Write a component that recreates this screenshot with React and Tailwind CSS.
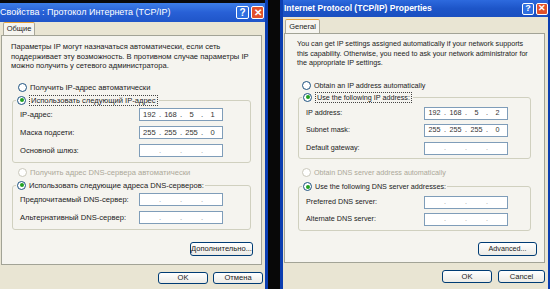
import React from 'react';

const Radio = ({ checked, disabled, label, focus }) => (
  <div className={`flex items-center gap-[3px] whitespace-nowrap ${disabled ? 'text-[#aca899]' : 'text-[#222]'}`}>
    <span
      className={`flex h-[9px] w-[9px] items-center justify-center rounded-full border bg-white ${
        disabled ? 'border-[#cac8bb]' : 'border-[#1c5180]'
      }`}
    >
      {checked && <span className="h-[4px] w-[4px] rounded-full bg-[#21a121]" />}
    </span>
    <span className={focus ? 'border border-dotted border-[#444] px-[1px] leading-[9px]' : 'leading-[9px]'}>{label}</span>
  </div>
);

const IpBox = ({ parts }) => (
  <div className="flex h-[13px] w-[84px] items-center border border-[#7f9db9] bg-white text-[#333]">
    {[0, 1, 2, 3].map((i) => (
      <React.Fragment key={i}>
        <span className="flex-1 text-center">{parts ? parts[i] : ''}</span>
        {i < 3 && <span className={parts ? '' : 'text-[#999]'}>.</span>}
      </React.Fragment>
    ))}
  </div>
);

const Btn = ({ children, w }) => (
  <div
    className={`flex items-center justify-center rounded-[3px] border border-[#003c74] bg-gradient-to-b from-white to-[#ecebe6] text-[#222] ${w}`}
  >
    {children}
  </div>
);

const TitleButtons = ({ size }) => (
  <div className="flex gap-[2px]">
    <div className={`flex items-center justify-center rounded-[2px] border border-white bg-[#2f6fe0] font-bold text-white ${size}`}>?</div>
    <div className={`flex items-center justify-center rounded-[2px] border border-white bg-[#e2512a] font-bold text-white ${size}`}>✕</div>
  </div>
);

const Row = ({ label, parts, h, labelW }) => (
  <div className={`flex items-center whitespace-nowrap ${h}`}>
    <span className={labelW}>{label}</span>
    <IpBox parts={parts} />
  </div>
);

const LeftDialog = () => (
  <div className="flex w-[268px] flex-col border-r-[3px] border-[#0b3db0]">
    <div className="h-[3px] bg-[#0a0a0a]" />
    <div className="flex h-[19px] items-center justify-between bg-gradient-to-b from-[#3d7ee8] via-[#2860d6] to-[#1f55c8] pr-[1px]">
      <span className="text-[9px] text-white">Свойства : Протокол Интернета (TCP/IP)</span>
      <TitleButtons size="h-[13px] w-[13px] text-[10px] leading-none" />
    </div>
    <div className="flex flex-1 flex-col bg-[#e9e5d3] text-[#222]">
      <div className="flex h-[13px] items-end pl-[3px]">
        <div className="flex h-[13px] w-[32px] items-center justify-center rounded-t-[2px] border border-b-0 border-[#a9a89a] border-t-[#e8a33a] bg-[#f6f5f0] text-[7.5px]">
          Общие
        </div>
      </div>
      <div className="ml-[1px] flex h-[230px] w-[261px] flex-col border border-[#a2a396] bg-[#f5f4ef] text-[7.6px]">
        <p className="px-[9px] pt-[6px] leading-[9.5px]">
          Параметры IP могут назначаться автоматически, если сеть поддерживает эту возможность. В противном случае параметры IP можно получить у сетевого администратора.
        </p>
        <div className="mt-[12px] pl-[16px]">
          <Radio label="Получить IP-адрес автоматически" />
        </div>
        <fieldset className="mx-[10px] mt-[3px] rounded-[3px] border border-[#d0d0bf] px-[7px] pb-[2px]">
          <legend className="-ml-[4px] px-[1px]">
            <Radio checked focus label="Использовать следующий IP-адрес" />
          </legend>
          <Row label="IP-адрес:" parts={['192', '168', '5', '1']} h="h-[18px]" labelW="w-[119px]" />
          <Row label="Маска подсети:" parts={['255', '255', '255', '0']} h="h-[18px]" labelW="w-[119px]" />
          <Row label="Основной шлюз:" h="h-[18px]" labelW="w-[119px]" />
        </fieldset>
        <div className="mt-[5px] pl-[16px]">
          <Radio disabled label="Получить адрес DNS-сервера автоматически" />
        </div>
        <fieldset className="mx-[10px] mt-[4px] rounded-[3px] border border-[#d0d0bf] px-[7px] pb-[2px] pt-[1px]">
          <legend className="-ml-[4px] px-[1px]">
            <Radio checked label="Использовать следующие адреса DNS-серверов:" />
          </legend>
          <Row label="Предпочитаемый DNS-сервер:" h="h-[18px]" labelW="w-[119px]" />
          <Row label="Альтернативный DNS-сервер:" h="h-[18px]" labelW="w-[119px]" />
        </fieldset>
        <div className="mt-[12px] flex justify-end pr-[8px]">
          <Btn w="w-[63px] h-[14px]">Дополнительно...</Btn>
        </div>
      </div>
      <div className="mt-[7px] flex justify-end gap-[5px] pr-[2px] text-[7.6px]">
        <Btn w="w-[50px] h-[12px]">OK</Btn>
        <Btn w="w-[50px] h-[12px]">Отмена</Btn>
      </div>
    </div>
  </div>
);

const RightDialog = () => (
  <div className="flex w-[270px] flex-col border-l-[3px] border-r-[2px] border-[#0b3db0]">
    <div className="flex h-[17px] items-center justify-between bg-gradient-to-b from-[#2d6ade] via-[#1d55c8] to-[#1a4fc0] pl-[1px]">
      <span className="text-[8.5px] font-bold text-white">Internet Protocol (TCP/IP) Properties</span>
      <TitleButtons size="h-[12px] w-[12px] text-[9px] leading-none" />
    </div>
    <div className="flex flex-1 flex-col bg-[#e9e5d3] text-[#222]">
      <div className="flex h-[16px] items-end pl-[2px]">
        <div className="flex h-[14px] w-[35px] items-center justify-center rounded-t-[2px] border border-b-0 border-[#a9a89a] border-t-[#e8a33a] bg-[#f6f5f0] text-[7.5px]">
          General
        </div>
      </div>
      <div className="ml-[1px] flex h-[230px] w-[261px] flex-col border border-[#a2a396] bg-[#f5f4ef] text-[7.2px]">
        <p className="px-[12px] pt-[5px] leading-[9.5px]">
          You can get IP settings assigned automatically if your network supports this capability. Otherwise, you need to ask your network administrator for the appropriate IP settings.
        </p>
        <div className="mt-[13px] pl-[17px]">
          <Radio label="Obtain an IP address automatically" />
        </div>
        <fieldset className="mx-[13px] mt-[2px] rounded-[3px] border border-[#d0d0bf] px-[7px] pb-[1px] pt-[2px]">
          <legend className="-ml-[4px] px-[1px]">
            <Radio checked focus label="Use the following IP address:" />
          </legend>
          <Row label="IP address:" parts={['192', '168', '5', '2']} h="h-[17.5px]" labelW="w-[118px]" />
          <Row label="Subnet mask:" parts={['255', '255', '255', '0']} h="h-[17.5px]" labelW="w-[118px]" />
          <Row label="Default gateway:" h="h-[17.5px]" labelW="w-[118px]" />
        </fieldset>
        <div className="mt-[9px] pl-[17px]">
          <Radio disabled label="Obtain DNS server address automatically" />
        </div>
        <fieldset className="mx-[13px] mt-[5px] rounded-[3px] border border-[#d0d0bf] px-[7px] pb-[2px] pt-[3px]">
          <legend className="-ml-[4px] px-[1px]">
            <Radio checked label="Use the following DNS server addresses:" />
          </legend>
          <Row label="Preferred DNS server:" h="h-[17px]" labelW="w-[118px]" />
          <Row label="Alternate DNS server:" h="h-[17px]" labelW="w-[118px]" />
        </fieldset>
        <div className="mt-[11px] flex justify-end pr-[7px]">
          <Btn w="w-[59px] h-[14px]">Advanced...</Btn>
        </div>
      </div>
      <div className="mt-[7px] flex justify-end gap-[6px] pr-[3px] text-[7.6px]">
        <Btn w="w-[50px] h-[13px]">OK</Btn>
        <Btn w="w-[47px] h-[13px]">Cancel</Btn>
      </div>
    </div>
  </div>
);

export default function App() {
  return (
    <div className="flex h-[289px] w-[550px] overflow-hidden bg-[#0a0a0a] font-['Liberation_Sans',Arial,sans-serif]">
      <LeftDialog />
      <div className="w-[12px] bg-[#080808]" />
      <RightDialog />
    </div>
  );
}
